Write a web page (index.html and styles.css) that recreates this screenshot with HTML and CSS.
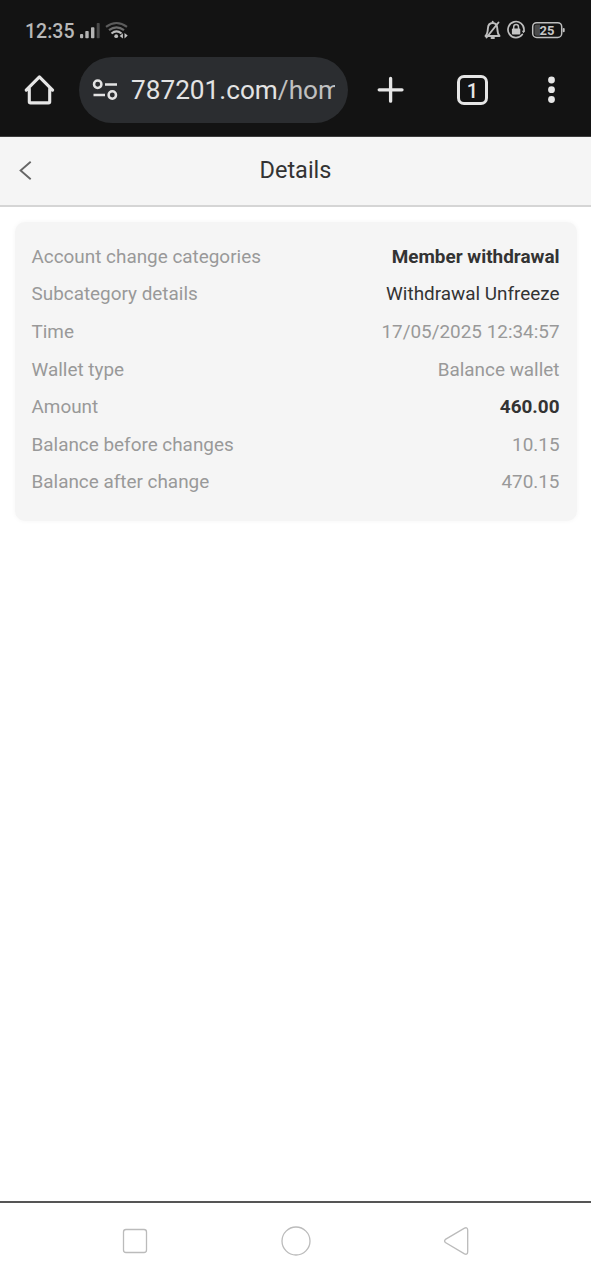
FILE: index.html
```html
<!DOCTYPE html>
<html lang="en">
<head>
<meta charset="utf-8">
<title>Details</title>
<link rel="stylesheet" href="styles.css">
</head>
<body>
<div class="screen">
  <div class="status">
    <span class="clock">12:35</span>
    <svg class="signal" width="54" height="24" viewBox="78 18 54 24">
      <g fill="#b4b4b4"><rect x="80" y="34" width="3.200" height="4.300" rx="1"/><rect x="85.300" y="31" width="3.400" height="7.300" rx=".8"/><rect x="91" y="27.300" width="3.400" height="11" rx=".8"/></g>
      <rect x="96.700" y="23" width="3" height="15.300" rx=".8" fill="#4a4a4a"/>
      <g fill="none" stroke-width="2.100">
        <path d="M106 26.800q10.500-7.600 21 0" stroke="#5c5c5c"/>
        <path d="M109 30.200q7.500-5.800 15 0" stroke="#6c6c6c"/>
        <path d="M111.500 33.500q5-4.200 10 0" stroke="#bdbdbd"/>
      </g>
      <circle cx="116.200" cy="36.200" r="1.900" fill="#bdbdbd"/>
      <path d="M122.900 33.300v5.300l-3.200-2.500zM124.500 38.400v-5.400l3.200 2.600z" fill="#c4c4c4"/>
    </svg>
    <svg class="indicators" width="84" height="24" viewBox="482 18 84 24">
      <g fill="none" stroke="#bebebe" stroke-width="1.900" stroke-linecap="round" stroke-linejoin="round">
        <path d="M485.500 36h14c-2-2-2-4-2.200-7.500-.2-3.700-1.800-5.500-4.600-5.500s-4.600 1.800-4.800 5.500c-.2 3.500-.4 5.500-2.400 7.500zM498.500 22.500 486.500 37.500"/>
        <path d="M491.500 38h2.500M492.700 21.800v1"/>
        <path d="M522.300 34.500a8 8 0 1 1 1.700-4.500v1" stroke-width="1.700"/>
        <path d="M513.700 29v-2a2.400 2.400 0 0 1 4.800 0v2" stroke-width="1.500"/>
      </g>
      <rect x="511.900" y="28.600" width="8.400" height="5.800" rx="1" fill="#c6c6c6"/>
      <path d="M521.800 30.800h3.400l-1.700 2.500z" fill="#bebebe"/>
      <rect x="532.700" y="22.700" width="29" height="14.800" rx="4" fill="none" stroke="#bebebe" stroke-width="1.500"/>
      <path d="M536.500 24.500h3.500v11.200h-3.500a2 2 0 0 1-2-2v-7.200a2 2 0 0 1 2-2z" fill="#4b4b4b"/>
      <rect x="562.700" y="28" width="2" height="4.300" rx="1" fill="#bebebe"/>
      <text x="547" y="34.700" class="battery-text" text-anchor="middle">25</text>
    </svg>
  </div>
  <div class="toolbar">
    <svg class="home" width="32" height="32" viewBox="24 74 32 32" fill="none" stroke="#e6e6e6" stroke-width="3.100" stroke-linecap="round" stroke-linejoin="round"><path d="M26.200 90.200 39.400 76.800 52.600 90.200M29.300 88.500v13.200q0 1.200 1.200 1.200h18q1.200 0 1.200-1.200V88.500"/></svg>
    <div class="address">
      <svg width="28" height="24" viewBox="91 78 28 24" fill="none" stroke="#e3e3e3" stroke-width="2.500"><circle cx="97.700" cy="84.300" r="3.700"/><path d="M105 84.500h12M93.500 95h11.500"/><circle cx="112.300" cy="95" r="3.700"/></svg>
      <span class="url">787201.com<span class="path">/hom</span></span>
    </div>
    <svg class="plus" width="28" height="28" viewBox="0 0 28 28" stroke="#e6e6e6" stroke-width="3.300" stroke-linecap="round"><path d="M2.200 13.800h22.800M13.600 2.400v22.800"/></svg>
    <div class="tabs">1</div>
    <svg class="more" width="8" height="28" viewBox="0 0 8 28" fill="#e6e6e6"><circle cx="3.500" cy="4" r="3.400"/><circle cx="3.500" cy="13.700" r="3.400"/><circle cx="3.500" cy="23.500" r="3.400"/></svg>
  </div>
  <header class="header">
    <svg class="back" width="14" height="22" viewBox="0 0 14 22" fill="none" stroke="#666" stroke-width="1.900"><path d="M11.700 1.700 1.600 10.500 11.700 19.300"/></svg>
    <h1 class="title">Details</h1>
  </header>
  <main class="content">
    <dl class="card">
      <div class="row"><dt>Account change categories</dt><dd class="strong">Member withdrawal</dd></div>
      <div class="row"><dt>Subcategory details</dt><dd class="dark">Withdrawal Unfreeze</dd></div>
      <div class="row"><dt>Time</dt><dd>17/05/2025 12:34:57</dd></div>
      <div class="row"><dt>Wallet type</dt><dd>Balance wallet</dd></div>
      <div class="row"><dt>Amount</dt><dd class="strong">460.00</dd></div>
      <div class="row"><dt>Balance before changes</dt><dd>10.15</dd></div>
      <div class="row"><dt>Balance after change</dt><dd>470.15</dd></div>
    </dl>
  </main>
  <nav class="navbar">
    <svg width="32" height="32" viewBox="0 0 32 32"><rect x="4.500" y="4.500" width="23" height="23" rx="2.500"/></svg>
    <svg width="32" height="32" viewBox="0 0 32 32"><circle cx="16" cy="16" r="14"/></svg>
    <svg width="32" height="32" viewBox="0 0 32 32"><path d="M5.400 14.400 24.500 3.100q3-1.300 3.200 2v21.800q-.2 3.300-3.200 2L5.400 17.600q-1.600-1.600 0-3.200z"/></svg>
  </nav>
</div>
</body>
</html>
```
FILE: styles.css
```css
* { box-sizing: border-box; }
body { margin: 0; background: #fff; font-family: Roboto, sans-serif; }
svg { display: block; flex: none; }
.screen { width: 591px; height: 1280px; display: flex; flex-direction: column; overflow: hidden; }

.status { flex: none; height: 57px; padding: 18px 25px 0; background: #131313; display: flex; align-items: flex-start; }
.clock { width: 53px; font-size: 19.5px; line-height: 27px; font-weight: 500; color: #b8b8b8; white-space: nowrap; }
.indicators { margin-left: auto; }
.battery-text { font-size: 13px; font-weight: 700; fill: #c6c6c6; }

.toolbar { flex: none; height: 80px; padding: 0 35px 13px 24px; background: #131313; border-bottom: 1px solid #3c3c3c; display: flex; align-items: center; }
.address { flex: none; width: 269px; height: 66px; margin-left: 23px; padding: 0 13px 0 12px; border-radius: 33px; background: #2b2d30; display: flex; align-items: center; gap: 12px; }
.url { flex: 1; overflow: hidden; white-space: nowrap; font-size: 26.2px; line-height: 34px; color: #e3e3e3; }
.path { color: #c0c0c0; }
.plus { margin-left: 29px; }
.tabs { width: 31px; height: 30px; margin-left: 52px; border: 3px solid #e6e6e6; border-radius: 7px; color: #e6e6e6; font-size: 20px; line-height: 26px; font-weight: 500; text-align: center; }
.more { margin-left: auto; }

.header { flex: none; height: 70px; padding: 0 19px 1px; background: #f5f5f5; border-bottom: 2px solid #d5d5d5; display: grid; grid-template-columns: 14px 1fr 14px; align-items: center; }
.title { margin: 0; text-align: center; font-size: 23.5px; line-height: 29px; font-weight: 400; color: #333; }

.content { flex: 1; padding: 15px 14.5px; }
.card { margin: 0; padding: 15.6px 17px 20.4px; border-radius: 10px; background: #f5f5f5; box-shadow: 0 0 5px #f5f5f5; }
.row { height: 37.6px; display: flex; justify-content: space-between; align-items: center; font-size: 18.9px; color: #999; white-space: nowrap; }
.row dd { margin: 0; }
.row .dark { color: #333; }
.row .strong { color: #333; font-weight: 700; }

.navbar { flex: none; height: 79px; border-top: 2px solid #555; padding: 0 119px 2px; display: flex; justify-content: space-between; align-items: center; }
.navbar svg { fill: none; stroke: #bbb; stroke-width: 1.3; }
```
